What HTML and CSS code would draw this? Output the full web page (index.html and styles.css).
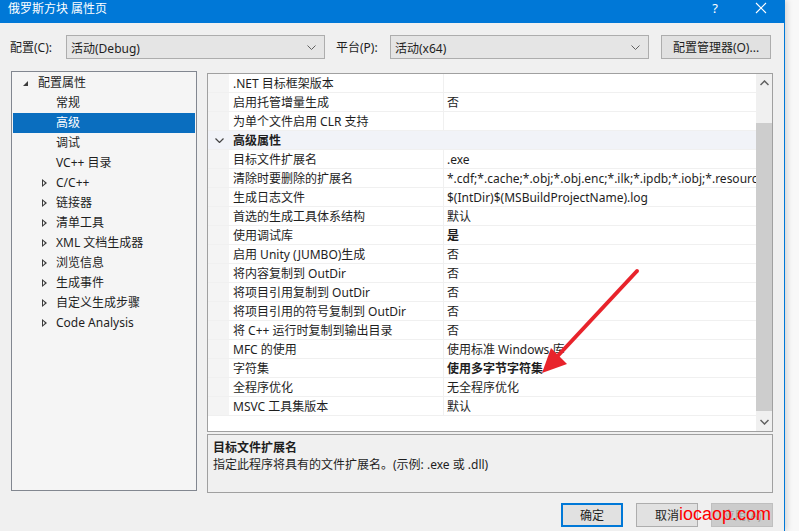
FILE: index.html
```html
<!DOCTYPE html>
<html lang="zh-CN">
<head>
  <meta charset="UTF-8" />
  <title>俄罗斯方块 属性页</title>
  <link rel="stylesheet" href="styles.css">
</head>
<body>
  <div class="window">
    <div class="titlebar">
      <span class="title">俄罗斯方块 属性页</span>
      <span class="help">?</span>
      <svg class="close" width="12" height="12" viewBox="0 0 12 12">
        <path d="M1 1 L11 11 M11 1 L1 11" stroke="#fff" stroke-width="1.1" fill="none"/>
      </svg>
    </div>

    <div class="config-row">
      <span class="label label-config">配置(C):</span>
      <div class="combo">
        <span>活动(Debug)</span>
        <svg class="chev" width="9" height="5" viewBox="0 0 9 5"><path d="M0.5 0.5 L4.5 4.5 L8.5 0.5" stroke="#606060" fill="none"/></svg>
      </div>
      <span class="label label-platform">平台(P):</span>
      <div class="combo">
        <span>活动(x64)</span>
        <svg class="chev" width="9" height="5" viewBox="0 0 9 5"><path d="M0.5 0.5 L4.5 4.5 L8.5 0.5" stroke="#606060" fill="none"/></svg>
      </div>
      <button class="btn btn-manager">配置管理器(O)...</button>
    </div>

    <div class="main">
      <div class="tree">
        <div class="node root"><span class="tri-open"></span>配置属性</div>
        <div class="node child">常规</div>
        <div class="node child selected">高级</div>
        <div class="node child">调试</div>
        <div class="node child">VC++ 目录</div>
        <div class="node child"><span class="tri"></span>C/C++</div>
        <div class="node child"><span class="tri"></span>链接器</div>
        <div class="node child"><span class="tri"></span>清单工具</div>
        <div class="node child"><span class="tri"></span>XML 文档生成器</div>
        <div class="node child"><span class="tri"></span>浏览信息</div>
        <div class="node child"><span class="tri"></span>生成事件</div>
        <div class="node child"><span class="tri"></span>自定义生成步骤</div>
        <div class="node child"><span class="tri"></span>Code Analysis</div>
      </div>

      <div class="right">
        <div class="grid">
          <div class="rows">
            <div class="row"><span class="gut"></span><span class="name">.NET 目标框架版本</span><span class="val"></span></div>
            <div class="row"><span class="gut"></span><span class="name">启用托管增量生成</span><span class="val">否</span></div>
            <div class="row"><span class="gut"></span><span class="name">为单个文件启用 CLR 支持</span><span class="val"></span></div>
            <div class="row category">
              <span class="gut"><svg width="9" height="5" viewBox="0 0 9 5"><path d="M0.5 0.5 L4.5 4.5 L8.5 0.5" stroke="#444" stroke-width="1.2" fill="none"/></svg></span>
              <span class="name">高级属性</span>
            </div>
            <div class="row"><span class="gut"></span><span class="name">目标文件扩展名</span><span class="val">.exe</span></div>
            <div class="row"><span class="gut"></span><span class="name">清除时要删除的扩展名</span><span class="val">*.cdf;*.cache;*.obj;*.obj.enc;*.ilk;*.ipdb;*.iobj;*.resources;*.tlb</span></div>
            <div class="row"><span class="gut"></span><span class="name">生成日志文件</span><span class="val">$(IntDir)$(MSBuildProjectName).log</span></div>
            <div class="row"><span class="gut"></span><span class="name">首选的生成工具体系结构</span><span class="val">默认</span></div>
            <div class="row"><span class="gut"></span><span class="name">使用调试库</span><span class="val bold">是</span></div>
            <div class="row"><span class="gut"></span><span class="name">启用 Unity (JUMBO)生成</span><span class="val">否</span></div>
            <div class="row"><span class="gut"></span><span class="name">将内容复制到 OutDir</span><span class="val">否</span></div>
            <div class="row"><span class="gut"></span><span class="name">将项目引用复制到 OutDir</span><span class="val">否</span></div>
            <div class="row"><span class="gut"></span><span class="name">将项目引用的符号复制到 OutDir</span><span class="val">否</span></div>
            <div class="row"><span class="gut"></span><span class="name">将 C++ 运行时复制到输出目录</span><span class="val">否</span></div>
            <div class="row"><span class="gut"></span><span class="name">MFC 的使用</span><span class="val">使用标准 Windows 库</span></div>
            <div class="row"><span class="gut"></span><span class="name">字符集</span><span class="val bold">使用多字节字符集</span></div>
            <div class="row"><span class="gut"></span><span class="name">全程序优化</span><span class="val">无全程序优化</span></div>
            <div class="row"><span class="gut"></span><span class="name">MSVC 工具集版本</span><span class="val">默认</span></div>
          </div>
          <div class="scrollbar">
            <svg class="sb-arrow" width="9" height="6" viewBox="0 0 9 6"><path d="M0.5 5 L4.5 1 L8.5 5" stroke="#606060" stroke-width="1.5" fill="none"/></svg>
            <div class="sb-track"><div class="sb-thumb"></div></div>
            <svg class="sb-arrow" width="9" height="6" viewBox="0 0 9 6"><path d="M0.5 1 L4.5 5 L8.5 1" stroke="#606060" stroke-width="1.5" fill="none"/></svg>
          </div>
        </div>

        <div class="desc">
          <div class="desc-title">目标文件扩展名</div>
          <div class="desc-text">指定此程序将具有的文件扩展名。(示例: .exe 或 .dll)</div>
        </div>
      </div>
    </div>

    <div class="footer">
      <button class="btn btn-default">确定</button>
      <button class="btn">取消</button>
      <button class="btn btn-disabled">应用(A)</button>
    </div>
  </div>

  <!-- annotation drawn over the screenshot -->
  <svg class="arrow" width="799" height="531" viewBox="0 0 799 531">
    <line x1="637" y1="271" x2="553" y2="361" stroke="#e8232b" stroke-width="4" stroke-linecap="round"/>
    <polygon points="542,373 551,348 567,364" fill="#e8232b"/>
  </svg>
  <div class="watermark">iocaop.com</div>
</body>
</html>
```

FILE: styles.css
```css
body {
  margin: 0;
  width: 799px;
  height: 531px;
  overflow: hidden;
  position: relative;
  background: linear-gradient(to right, #e9e9e9, #f8f8f8 8px);
  font-family: "Noto Sans", "Noto Sans CJK SC", sans-serif;
  font-size: 12px;
  color: #1e1e1e;
}

.window {
  width: 784px;
  height: 531px;
  background: #f0f0f0;
  border-right: 1px solid #0078d7;
  box-shadow: 2px 0 6px rgba(0,0,0,0.15);
}

/* title bar */
.titlebar {
  height: 23px;
  background: #0078d7;
  color: #fff;
  display: flex;
  align-items: flex-start;
}

.title {
  margin-left: 8px;
  line-height: 17px;
  font-size: 12px;
}

.help {
  margin-left: auto;
  margin-right: 37px;
  line-height: 17px;
  font-size: 13px;
}

.close {
  margin-right: 17px;
  margin-top: 2px;
}

/* configuration row */
.config-row {
  display: flex;
  align-items: center;
  height: 25px;
  margin-top: 11px;
}

.label {
  padding-top: 1px;
}

.label-config {
  margin-left: 10px;
  width: 56px;
}

.label-platform {
  margin-left: 11px;
  width: 54px;
}

.combo {
  width: 259px;
  height: 24px;
  box-sizing: border-box;
  border: 1px solid #adadad;
  background: #e5e5e5;
  display: flex;
  align-items: center;
  padding: 1px 8px 0 4px;
  margin-top: 1px;
}

.combo .chev {
  margin-left: auto;
}

.btn {
  font-family: inherit;
  font-size: 12px;
  color: #1e1e1e;
  background: #e1e1e1;
  border: 1px solid #adadad;
  height: 24px;
  padding: 0;
  box-sizing: border-box;
}

.btn-manager {
  width: 110px;
  margin-left: 12px;
}

/* main area */
.main {
  display: flex;
  margin-top: 12px;
  padding-left: 11px;
  gap: 10px;
  height: 422px;
}

.tree {
  width: 186px;
  height: 420px;
  box-sizing: border-box;
  border: 1px solid #828790;
  background: #f5f5f5;
  padding: 1px 1px 0;
}

.node {
  height: 20px;
  line-height: 20px;
  display: flex;
  align-items: center;
  white-space: nowrap;
}

.root {
  padding-left: 10px;
}

.child {
  padding-left: 43px;
}

.tri-open {
  width: 0;
  height: 0;
  border-left: 5px solid transparent;
  border-bottom: 5px solid #3c3c3c;
  margin-right: 10px;
  margin-top: 1px;
}

.tri {
  width: 0;
  height: 0;
  border-top: 4px solid transparent;
  border-bottom: 4px solid transparent;
  border-left: 5px solid #3c3c3c;
  margin-left: -14px;
  margin-right: 9px;
  position: relative;
}

.tri::after {
  content: "";
  position: absolute;
  left: -4px;
  top: -2px;
  border-top: 2px solid transparent;
  border-bottom: 2px solid transparent;
  border-left: 2.5px solid #f5f5f5;
}

.selected {
  background: #0a6ebf;
  color: #fff;
}

.right {
  width: 566px;
  display: flex;
  flex-direction: column;
  gap: 2px;
  padding-top: 2px;
}

/* property grid */
.grid {
  height: 359px;
  box-sizing: border-box;
  border: 1px solid #a0a0a0;
  background: #fff;
  display: flex;
}

.rows {
  width: 548px;
  overflow: hidden;
}

.row {
  display: grid;
  grid-template-columns: 21px 214px 1fr;
  height: 19px;
  line-height: 18px;
  border-bottom: 1px solid #f0f0f0;
  box-sizing: border-box;
}

.gut {
  background: #f4f4f4;
  display: flex;
  align-items: center;
  justify-content: center;
}

.name {
  padding: 1px 0 0 4px;
  white-space: nowrap;
  overflow: hidden;
}

.val {
  border-left: 1px solid #f0f0f0;
  padding: 1px 0 0 3px;
  white-space: nowrap;
  overflow: hidden;
}

.bold {
  font-weight: bold;
}

.category {
  background: #f1f3f8;
  grid-template-columns: 21px 1fr;
}

.category .gut {
  background: #f1f3f8;
  padding-left: 2px;
}

.category .name {
  font-weight: bold;
}

.scrollbar {
  width: 16px;
  background: #f0f0f0;
  display: flex;
  flex-direction: column;
  align-items: center;
}

.sb-arrow {
  margin: 6px 0;
}

.sb-track {
  flex: 1;
  width: 100%;
  padding-top: 31px;
  padding-bottom: 2px;
  box-sizing: border-box;
  display: flex;
}

.sb-thumb {
  flex: 1;
  background: #cdcdcd;
}

/* description */
.desc {
  height: 59px;
  box-sizing: border-box;
  border: 1px solid #a0a0a0;
  background: #f0f0f0;
  padding: 4px 5px 0;
  line-height: 17px;
}

.desc-title {
  font-weight: bold;
}

/* footer */
.footer {
  display: flex;
  justify-content: flex-end;
  gap: 13px;
  margin-top: 10px;
  padding-right: 11px;
}

.footer .btn {
  width: 62px;
}

.btn-default {
  border: 2px solid #0078d7;
}

.btn-disabled {
  background: #cccccc;
  border-color: #bfbfbf;
  color: #a0a0a0;
}

/* overlays */
.arrow {
  position: absolute;
  left: 0;
  top: 0;
  pointer-events: none;
}

.watermark {
  position: absolute;
  left: 679px;
  top: 502px;
  color: #ff0000;
  font-family: "Liberation Sans", sans-serif;
  font-size: 18px;
  line-height: 24px;
}
```
